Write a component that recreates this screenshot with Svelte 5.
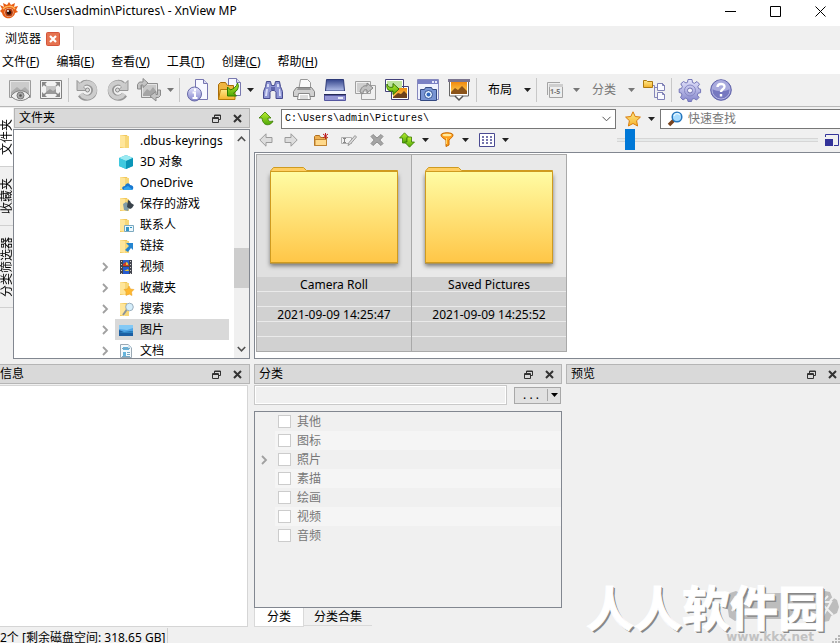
<script>
  const menus = [['文件', 'F'], ['编辑', 'E'], ['查看', 'V'], ['工具', 'T'], ['创建', 'C'], ['帮助', 'H']];
  const folders = [
    { name: '.dbus-keyrings', icon: 'plain' },
    { name: '3D 对象', icon: 'cube' },
    { name: 'OneDrive', icon: 'cloud' },
    { name: '保存的游戏', icon: 'games' },
    { name: '联系人', icon: 'contacts' },
    { name: '链接', icon: 'links' },
    { name: '视频', icon: 'video', more: true },
    { name: '收藏夹', icon: 'favs', more: true },
    { name: '搜索', icon: 'search', more: true },
    { name: '图片', icon: 'picture', more: true, selected: true },
    { name: '文档', icon: 'document', more: true }
  ];
  const thumbs = [
    { name: 'Camera Roll', date: '2021-09-09 14:25:47' },
    { name: 'Saved Pictures', date: '2021-09-09 14:25:52' }
  ];
  const categories = ['其他', '图标', '照片', '素描', '绘画', '视频', '音频'];
  let path = $state('C:\\Users\\admin\\Pictures\\');
  let zoom = $state(4);
</script>

{#snippet caret()}
  <svg width="7" height="4" viewBox="0 0 7 4"><path d="M0 0h7L3.5 4z" fill="currentColor" /></svg>
{/snippet}

{#snippet chevron()}
  <svg width="7" height="10" viewBox="0 0 7 10"><path d="M1 1l4 4-4 4" fill="none" stroke="#a0a0a0" stroke-width="1.8" /></svg>
{/snippet}

{#snippet dockTitle(title)}
  <header class="dock-title">
    <h2>{title}</h2>
    <button aria-label="浮动"><svg width="9" height="9" viewBox="0 0 9 9"><path d="M2.5 3V1h6v4.500h-2M.5 3.500h6v5h-6zM.5 4.500h6M2.500 1.500h6" fill="none" stroke="#333" /></svg></button>
    <button aria-label="关闭"><svg width="9" height="9" viewBox="0 0 9 9"><path d="M1 1l7 7M8 1L1 8" stroke="#333" stroke-width="2" /></svg></button>
  </header>
{/snippet}

{#snippet folderIcon(kind)}
  <svg width="16" height="16" viewBox="0 0 16 16">
    {#if kind === 'cube'}
      <path d="M1 4l7-3 7 3v8l-7 3-7-3z" fill="#35b9d3" /><path d="M1 4l7-3 7 3-7 3z" fill="#9beaf2" /><path d="M8 7l7-3v8l-7 3z" fill="#0b96b8" /><path d="M1 4l7 3v8l-7-3z" fill="#3fc9df" />
    {:else if kind === 'video'}
      <path d="M2 1h12v14H2z" fill="#44464f" /><path d="M5 1h6v6H5z" fill="#315fc4" /><path d="M5 8h6v7H5z" fill="#255bd0" /><path d="M5 5l3-2 3 3v1H5z" fill="#d33c25" /><path d="M8 3l2 1v2H8zM6 12l4-2 1 2z" fill="#e8c53a" /><path d="M3.500 2v13M12.500 2v13" stroke="#ccc" stroke-dasharray="1 2" />
    {:else if kind === 'picture'}
      <path d="M1 3h14v11H1z" fill="#4fa5e6" /><path d="M1 3h14v3l-6 2-8-1z" fill="#84c9f5" /><path d="M1 8l5 2 9-1v5H1z" fill="#1c5fa3" /><path d="M1 11c5-2 9 0 14-2v2H1z" fill="#2d86c4" />
    {:else if kind === 'document'}
      <path d="M2.500 1.500h8l3 3v10h-11z" fill="#f5fafd" stroke="#9ba9b4" /><path d="M5 4h6v3H5zM5 9h3v4H5z" fill="#65b4dc" /><path d="M4 5.500h8M9 9.500h3M9 11.500h3M4 13.500h8" stroke="#78a9c5" /><path d="M10 1v4h4" fill="#d3e4ed" />
    {:else}
      <path d="M2 2h7l1 2h1v11H2z" fill="#f0c75c" /><path d="M2 2l5 1v12l-5-1z" fill="#ffe69a" /><path d="M7 3h4v12H7z" fill="#f7d778" />
      {#if kind === 'cloud'}<path d="M6 15c-3-1-2-4 1-4 1-4 5-3 5-1 4 0 4 4 2 5z" fill="#1878d1" /><path d="M6 13l4-2 5 4H6z" fill="#33a4ec" />
      {:else if kind === 'games'}<path d="M5 8l3-2 4 3-2 6-4-1z" fill="#7f9ba7" /><path d="M10 4l2 1 1 2 3 2-2 3-2 1-3-2z" fill="#39434b" />
      {:else if kind === 'contacts'}<path d="M6.500 8.500h9v6h-9z" fill="#edf7fc" stroke="#7ca9bf" /><path d="M8 10h3v4H8zM12 10h2v1h-2z" fill="#3295c6" />
      {:else if kind === 'links'}<path d="M8 5h7v7l-2-2-3 4-3-2 4-4z" fill="#2585d1" />
      {:else if kind === 'favs'}<path d="M11 6l1.500 3 3.500.5-2.500 2.500.5 3.500-3-1.500-3 1.500.5-3.500L6 9.500 9.500 9z" fill="#ffb82e" stroke="#e79b1e" stroke-width=".5" />
      {:else if kind === 'search'}<circle cx="11.500" cy="6" r="3.800" fill="#d5eefb" stroke="#9bafbd" /><path d="M8.500 9L5 14" stroke="#8c9499" stroke-width="2" />{/if}
    {/if}
  </svg>
{/snippet}

<svg class="defs" width="0" height="0" aria-hidden="true">
  <defs>
    <linearGradient id="folder" x2="0" y2="1"><stop stop-color="#fffca4" /><stop offset="1" stop-color="#ffc647" /></linearGradient>
    <linearGradient id="gold" x2="0" y2="1"><stop stop-color="#ffe98a" /><stop offset="1" stop-color="#f5b32c" /></linearGradient>
    <linearGradient id="green" x2="0" y2="1"><stop stop-color="#b9ee31" /><stop offset="1" stop-color="#4fa808" /></linearGradient>
    <linearGradient id="violet" x2="0" y2="1"><stop stop-color="#e5e5fc" /><stop offset="1" stop-color="#8486cc" /></linearGradient>
    <linearGradient id="gray" x2="0" y2="1"><stop stop-color="#e6e6e6" /><stop offset="1" stop-color="#b4b4b4" /></linearGradient>
    <linearGradient id="lid" x2="0" y2="1"><stop stop-color="#34458c" /><stop offset="1" stop-color="#b4c0ea" /></linearGradient>
    <linearGradient id="sunset" x2="0" y2="1"><stop stop-color="#f08a10" /><stop offset="1" stop-color="#ffd558" /></linearGradient>
    <g id="rotate">
      <path d="M6 5.500a7.500 7.500 0 1 1-1.500 10" fill="none" stroke="#969696" stroke-width="6" />
      <path d="M1 1.500v10h10l-3.500-3.500L4 4.500z" fill="#c9c9c9" stroke="#969696" />
      <path d="M5 7l1.500-1.500a7.500 7.500 0 1 1-1.600 9.200" fill="none" stroke="#cdcdcd" stroke-width="4" />
      <circle cx="11.500" cy="11" r="2" fill="#ddd" stroke="#8a8a8a" />
    </g>
  </defs>
</svg>

<div class="app">
  <div class="titlebar">
    <svg width="19" height="18" viewBox="0 0 19 18"><path d="M2 7L0 3l4 2-1-4 4 2 2-3 2 3 4-2-1 4 4-1-2 4 2 2-3 1c-1 6-11 8-13 0L0 9z" fill="#e75b12" /><path d="M3 7c2-3 9-4 12 0" stroke="#ffb45b" stroke-width="1.500" fill="none" /><circle cx="9" cy="10.500" r="4.500" fill="#f6d9c4" /><circle cx="9" cy="10.500" r="3.900" fill="#b23a0c" /><circle cx="9" cy="10.500" r="2.200" fill="#2f120b" /><circle cx="8" cy="9" r="1" fill="#fff" /></svg>
    <h1>C:\Users\admin\Pictures\ - XnView MP</h1>
    <button aria-label="最小化"><svg width="11" height="11"><path d="M0 5.500h11" stroke="#000" /></svg></button>
    <button aria-label="最大化"><svg width="11" height="11"><path d="M.5.5h10v10H.5z" fill="none" stroke="#000" /></svg></button>
    <button aria-label="关闭窗口"><svg width="11" height="11"><path d="M.5.5l10 10m0-10l-10 10" stroke="#000" /></svg></button>
  </div>

  <div class="window-tabs">
    <div class="window-tab"><span>浏览器</span>
      <button aria-label="关闭标签"><svg width="14" height="14" viewBox="0 0 14 14"><rect x=".5" y=".5" width="13" height="13" rx="1" fill="#e57350" stroke="#d4553b" /><path d="M4 4l6 6m0-6l-6 6" stroke="#fff" stroke-width="2.200" /></svg></button>
    </div>
  </div>

  <nav class="menubar">
    {#each menus as [label, key]}<button>{label}(<u>{key}</u>)</button>{/each}
  </nav>

  <div class="toolbar" role="toolbar" aria-label="工具栏">
    <button class="tool" aria-label="查看图像"><svg width="24" height="24" viewBox="0 0 24 24"><path d="M1.500 2.500h21v17h-21z" fill="#e6e6e6" stroke="#9c9c9c" /><path d="M3 4h18v14H3z" fill="#cbcbcb" /><path d="M3 14l6-5 4 3 4-3 4 4v5H3z" fill="#adadad" /><path d="M3 18c5-7 14-7 19 0-5 6-14 6-19 0z" fill="#eee" stroke="#7d7d7d" /><circle cx="12.500" cy="17.500" r="3.500" fill="#aaa" stroke="#777" /><circle cx="12.500" cy="17.500" r="1.300" fill="#555" /></svg></button>
    <button class="tool" aria-label="全屏"><svg width="24" height="24" viewBox="0 0 24 24"><path d="M1.500 2.500h21v18h-21z" fill="#f2f2f2" stroke="#808080" /><path d="M7 8h10v8H7z" fill="#c4c4c4" /><path d="M7 14l4-3 3 2 3-2v5H7z" fill="#9a9a9a" /><path d="M3 4h5L3 9zM21 4h-5l5 5zM3 19h5l-5-5zM21 19h-5l5-5z" fill="#888" /><path d="M4 5l3 3M20 5l-3 3M4 18l3-3M20 18l-3-3" stroke="#888" stroke-width="1.500" /></svg></button>
    <i class="sep"></i>
    <button class="tool" aria-label="向左旋转"><svg width="22" height="22" viewBox="0 0 22 22"><use href="#rotate" /></svg></button>
    <button class="tool" aria-label="向右旋转"><svg width="22" height="22" viewBox="0 0 22 22"><use href="#rotate" transform="matrix(-1 0 0 1 22 0)" /></svg></button>
    <button class="tool" aria-label="无损变换"><svg width="24" height="24" viewBox="0 0 24 24"><path d="M4.500 5.500h16v14h-16z" fill="#e4e4e4" stroke="#909090" /><path d="M6 7h13v11H6z" fill="#c8c8c8" /><path d="M6 16l4-5 3 2 3-4 3 4v5H6z" fill="#a5a5a5" /><path d="M.5 11V6.500l2-2.500H6V.5l5 4.500-5 4.500V7H4v4z" fill="#c4c4c4" stroke="#8a8a8a" /><path d="M23.500 12v5.500l-2 2H19V23l-6-5 6-4.500v3h1.500V12z" fill="#c4c4c4" stroke="#8a8a8a" /></svg></button>
    <button class="drop dim" aria-label="变换选项">{@render caret()}</button>
    <i class="sep"></i>
    <button class="tool" aria-label="属性"><svg width="22" height="24" viewBox="0 0 22 24"><path d="M8.500 1.500h8l4 4v16h-12z" fill="#f7f8ff" stroke="#7776b1" /><path d="M16.500 1.500v4h4" fill="#d9daf3" stroke="#7776b1" /><circle cx="7.500" cy="16" r="7" fill="url(#violet)" stroke="#6668a7" /><path d="M8 10.500v2.500M5.500 14.500h2.500V20M5.500 20h5" stroke="#fff" stroke-width="2" fill="none" /></svg></button>
    <button class="tool" aria-label="打开"><svg width="24" height="24" viewBox="0 0 24 24"><path d="M11.500.5h8l4 4v13h-12z" fill="#f7f8ff" stroke="#7979af" /><path d="M19.500.5v4h4" fill="#d7d9ef" stroke="#7979af" /><path d="M1.500 21V6.500l2-2h5l2 3h6V21z" fill="#eeb541" stroke="#a96b07" /><path d="M1.500 21.500l2-10H18v10z" fill="url(#gold)" stroke="#b67b0b" /><path d="M10.500 9v9h9l-3-3c4-2 6-6 4-10-1 4-4 5.500-7 7z" fill="url(#green)" stroke="#2e7b00" /></svg></button>
    <button class="drop" aria-label="打开选项">{@render caret()}</button>
    <button class="tool" aria-label="搜索"><svg width="22" height="22" viewBox="0 0 22 22"><path d="M4.500 2.500h4l1 4h3l1-4h4l1 5 2 5v7h-6.500v-6l-1.500-2h-3L8 13.500v6H1.500v-7l2-5z" fill="#8d94d3" stroke="#474b8f" /><path d="M5 5h2v3H5zM15 5h2v3h-2zM4 10h2l-1 7H3zM17 10h1l1 7h-2z" fill="#d9ddf7" /><path d="M9 8h4v3H9z" fill="#5f64ab" /></svg></button>
    <button class="tool" aria-label="打印"><svg width="22" height="22" viewBox="0 0 22 22"><path d="M6 9L7.500.5h7l3 3V9" fill="#fafafa" stroke="#999" /><path d="M3.500 8.500h15l3 4v5h-21v-5z" fill="#d0d0d0" stroke="#808080" /><path d="M5 9h12l1 2H4z" fill="#999" /><path d="M5.500 14.500h11l1 6h-13z" fill="#fff" stroke="#888" /><path d="M7 17h8M7 19h8" stroke="#bbb" /></svg></button>
    <button class="tool" aria-label="扫描"><svg width="22" height="22" viewBox="0 0 22 22"><path d="M2.500.5h17l1 11.500h-19z" fill="url(#lid)" stroke="#2c3978" /><path d="M0 12h22v3H0z" fill="#f4f6fe" /><path d="M0 15h22v2H0z" fill="#262b55" /><path d="M.5 16.500h21v5H.5z" fill="#9496d4" stroke="#5557a0" /><path d="M14 19h5" stroke="#e7e9fa" stroke-width="2" /></svg></button>
    <button class="tool" aria-label="转换"><svg width="22" height="22" viewBox="0 0 22 22"><path d="M.5 2.500h15v12H.5zM6.500 6.500h14v14h-14z" fill="#f0f0f0" stroke="#a0a0a0" /><path d="M2 4h12v9H2z" fill="#cfcfcf" /><path d="M5 13c1-5 4-7 7-6V4l6 5-6 5v-3c-3-1-4 1-4 4z" fill="#c0c0c0" stroke="#858585" /></svg></button>
    <button class="tool" aria-label="批量转换"><svg width="24" height="22" viewBox="0 0 24 22"><path d="M.5.5h18v12H.5zM6.500 7.500h17v13h-17z" fill="#fff" stroke="#42407a" /><path d="M2 2h15v9H2z" fill="#bfe3a0" /><path d="M8 9h14v10H8z" fill="url(#sunset)" /><path d="M8 18l5-4 3 1 3-3 3 3v4H8z" fill="#6d411d" /><path d="M2 5c1 3 3 4 6 3V4.500l6 5.500-6 5.500V12C4 13 1 10 2 5z" fill="url(#green)" stroke="#337400" /></svg></button>
    <button class="tool" aria-label="捕获"><svg width="22" height="22" viewBox="0 0 22 22"><path d="M.5.5h21v20H.5z" fill="#eef1fd" stroke="#8688bd" /><path d="M1 1h20v4H1z" fill="#7a80c4" /><path d="M15 2h2v2h-2zM18 2h2v2h-2z" fill="#e4e6f9" /><path d="M3.500 10.500h4l1-2h6l1 2h4v11h-16z" fill="#7894d3" stroke="#344980" /><circle cx="11.500" cy="15.500" r="4" fill="#e7f3ff" stroke="#314e92" /><circle cx="11.500" cy="15.500" r="2" fill="#3168be" /></svg></button>
    <button class="tool" aria-label="幻灯片"><svg width="24" height="24" viewBox="0 0 24 24"><path d="M2.500 3v15h19V3" fill="#fff" stroke="#666" /><path d="M1 1h22v3H1z" fill="#7b7590" /><path d="M4 4h16v12H4z" fill="url(#sunset)" /><path d="M4 14l4-4 3 2 4-4 5 5v3H4z" fill="#8a5319" /><path d="M8 18l4 4 4-4" fill="#fff" stroke="#555" stroke-width="1.500" /></svg></button>
    <i class="sep"></i>
    <button class="text-tool">布局</button>
    <button class="drop" aria-label="布局选项">{@render caret()}</button>
    <i class="sep"></i>
    <button class="tool" aria-label="评级"><svg width="18" height="18" viewBox="0 0 18 18"><path d="M1.500 14V1.500H14M3.500 3.500h13v13h-13z" fill="#eee" stroke="#a4a4a4" /><path d="M3 3h14v3H3z" fill="#cecece" /><text x="4" y="13" font-size="7" font-weight="bold" fill="#777">1-5</text></svg></button>
    <button class="drop dim" aria-label="评级选项">{@render caret()}</button>
    <button class="text-tool dim">分类</button>
    <button class="drop dim" aria-label="分类选项">{@render caret()}</button>
    <button class="tool" aria-label="目录树"><svg width="24" height="24" viewBox="0 0 24 24"><path d="M1.500 9.500v-7h3l1 1h5v6z" fill="url(#gold)" stroke="#ad7910" /><path d="M11 7.500h1.500v12H15M12.500 9.500H15" stroke="#8486ba" fill="none" /><path d="M15.500 5.500h5l2 2v5h-7zM15.500 14.500h5l2 2v5h-7z" fill="#fafbff" stroke="#8182b7" /><path d="M20.500 5v2.500H23M20.500 14v2.500H23" stroke="#8182b7" fill="none" /></svg></button>
    <i class="sep"></i>
    <button class="tool" aria-label="设置"><svg width="22" height="22" viewBox="0 0 22 22"><path d="M9 .5h4l.5 3 2 .8 2.500-1.800 2.500 2.700-1.700 2.500.8 2 2 .5v3.500l-2.500.5-.8 2 1.700 2.300-2.500 2.500-2.500-1.500-2 .8-.5 2.200H9l-.5-2.500-2-.8L4 21l-2.500-2.500L3 16l-.8-2-2-.5V10l2.300-.5.8-2-1.500-2.700L4.500 2.500 7 4l1.500-.7z" fill="url(#violet)" stroke="#7476b8" /><circle cx="11" cy="11.500" r="5.500" fill="none" stroke="#8889c5" /><circle cx="11" cy="11.500" r="2.500" fill="#f3f3fc" stroke="#7172b1" /></svg></button>
    <button class="tool" aria-label="帮助"><svg width="22" height="22" viewBox="0 0 22 22"><circle cx="11" cy="11" r="10.300" fill="#7678c0" stroke="#6365ab" /><circle cx="11" cy="11" r="9" fill="none" stroke="#b3b4e2" /><path d="M2 10a9 9 0 0118 0c-6 3-12 3-18 0z" fill="#a9aadd" /><path d="M7.500 8c0-4 7-4 7-.5 0 3-3.500 2.500-3.500 5.500M11 15v2.500" stroke="#fff" stroke-width="2.400" fill="none" /></svg></button>
  </div>

  <div class="upper">
    <div class="side-tabs">
      <button class="active">文件夹</button>
      <button>收藏夹</button>
      <button>分类筛选器</button>
    </div>
    <section class="folders">
      {@render dockTitle('文件夹')}
      <div class="tree">
        <ul>
          {#each folders as f}
            <li>
              <span class="expander">{#if f.more}{@render chevron()}{/if}</span>
              <span class="entry" class:selected={f.selected}>{@render folderIcon(f.icon)}{f.name}</span>
            </li>
          {/each}
        </ul>
        <div class="scrollbar">
          <svg width="9" height="6" viewBox="0 0 9 6"><path d="M.8 5l3.700-3.800L8.200 5" fill="none" stroke="#505050" stroke-width="1.600" /></svg>
          <div class="track"><div class="grip"></div></div>
          <svg width="9" height="6" viewBox="0 0 9 6"><path d="M.8 1l3.700 3.800L8.200 1" fill="none" stroke="#505050" stroke-width="1.600" /></svg>
        </div>
      </div>
    </section>

    <main class="browser">
      <div class="address-row">
        <button class="up" aria-label="上一级"><svg width="16" height="16" viewBox="0 0 16 16"><path d="M1 7l6-6 6 6h-3c0 3 1 4 5 3-1 4-10 7-11-3z" fill="url(#green)" stroke="#397900" stroke-width=".8" /></svg></button>
        <div class="address">
          <input aria-label="路径" bind:value={path} />
          <button aria-label="路径历史"><svg width="9" height="6" viewBox="0 0 9 6"><path d="M.5.8l4 4 4-4" fill="none" stroke="#555" /></svg></button>
        </div>
        <button class="star" aria-label="收藏"><svg width="16" height="16" viewBox="0 0 16 16"><path d="M8 .8l2.200 4.700 5.200.6-3.800 3.600 1 5.300L8 12.500 3.400 15l1-5.300L.6 6.100l5.200-.6z" fill="url(#gold)" stroke="#d97c0a" /></svg></button>
        <button class="drop" aria-label="收藏选项">{@render caret()}</button>
        <div class="quick">
          <svg width="16" height="16" viewBox="0 0 16 16"><path d="M7 9l-5 5" stroke="#79431d" stroke-width="3.500" /><circle cx="10" cy="6" r="4.800" fill="#a8dcff" stroke="#2676bd" stroke-width="1.500" /><path d="M7 5c1-3 4-3 6-1" stroke="#e5f7ff" fill="none" stroke-width="1.500" /></svg>
          <input aria-label="快速查找" placeholder="快速查找" />
        </div>
      </div>
      <div class="action-row">
        <button class="act" aria-label="后退"><svg width="14" height="14" viewBox="0 0 14 14"><path d="M.8 7L7 .8v3.700h6v5H7v3.700z" fill="#ddd" stroke="#9b9b9b" /></svg></button>
        <button class="act" aria-label="前进"><svg width="14" height="14" viewBox="0 0 14 14"><path d="M13.200 7L7 .8v3.700H1v5h6v3.700z" fill="#ddd" stroke="#9b9b9b" /></svg></button>
        <button class="act group" aria-label="新建文件夹"><svg width="16" height="14" viewBox="0 0 16 14"><path d="M1.500 12.500V3.500l1-1h4l1 2h6v8z" fill="#eeb052" stroke="#b17021" /><path d="M2 12.500v-6h11.500v6z" fill="#ffd98b" stroke="#c08330" /><path d="M12.500 0v6M10 1l5 4M15 1l-5 4" stroke="#bd1d23" /></svg></button>
        <button class="act" aria-label="重命名"><svg width="16" height="14" viewBox="0 0 16 14"><path d="M.5 4.500h10v6H.5z" fill="#f2f2f2" stroke="#b0b0b0" /><path d="M2 5.500h3M3.500 5.500v4M2 9.500h3" stroke="#888" /><path d="M7 12.500l1-3 6-7 1.500 1.500-6 7z" fill="#ddd" stroke="#999" /></svg></button>
        <button class="act" aria-label="删除"><svg width="14" height="14" viewBox="0 0 14 14"><path d="M3 1.500L7 5l4-3.500 2 2L9.800 7l3.200 3.500-2 2L7 9l-4 3.500-2-2L4.200 7 1 3.500z" fill="#a5a5a5" stroke="#8d8d8d" /></svg></button>
        <button class="act group" aria-label="刷新"><svg width="16" height="16" viewBox="0 0 16 16"><path d="M5.500.8l5 5.200H8v5H3.500V6H.5z" fill="url(#green)" stroke="#397900" stroke-width=".8" /><path d="M10.500 15.200l-5-5.200H8V5h4.500v5h3z" fill="url(#green)" stroke="#397900" stroke-width=".8" /></svg></button>
        <button class="drop" aria-label="刷新选项">{@render caret()}</button>
        <button class="act" aria-label="筛选"><svg width="14" height="15" viewBox="0 0 14 15"><path d="M1 3c0-3 12-3 12 0 0 2-2 3-4 5v5l-3 1.500V8C3 6 1 5 1 3z" fill="#ff9e1b" stroke="#c86a00" /><ellipse cx="7" cy="3" rx="4.500" ry="1.300" fill="#ffeaa0" /><path d="M6.500 6v6" stroke="#ffda6e" /></svg></button>
        <button class="drop" aria-label="筛选选项">{@render caret()}</button>
        <button class="act" aria-label="视图"><svg width="16" height="14" viewBox="0 0 16 14"><path d="M.5.5h15v13H.5z" fill="#fff" stroke="#4a4a92" /><path d="M3 4h10M3 7h10M3 10h10" stroke="#4a4a92" stroke-width="1.500" stroke-dasharray="2 2" /></svg></button>
        <button class="drop" aria-label="视图选项">{@render caret()}</button>
        <input class="size" type="range" min="0" max="100" aria-label="缩略图大小" bind:value={zoom} />
        <button class="fit" aria-label="适合大小"><svg width="14" height="12" viewBox="0 0 14 12"><path d="M.5 3V.5h13v11H9" fill="none" stroke="#333399" /><path d="M0 5h8v7H0z" fill="#333399" /></svg></button>
      </div>
      <div class="gallery">
        <div class="cards">
          {#each thumbs as t}
            <article>
              <div class="thumb">
                <svg width="134" height="104" viewBox="0 0 134 104"><path class="shadow" d="M3 6h128v91H3z" fill="#888" /><path d="M3.500 96V4l3-3.500h30l3 3h91V96z" fill="#ffce62" stroke="#cf9b20" /><path d="M3.500 4.500h127v91H3.500z" fill="url(#folder)" stroke="#cf9b20" /></svg>
              </div>
              <p>{t.name}</p><p></p><p>{t.date}</p><p></p><p></p>
            </article>
          {/each}
        </div>
      </div>
    </main>
  </div>

  <div class="lower">
    <section class="info">
      {@render dockTitle('信息')}
      <div class="info-body"></div>
    </section>
    <section class="category">
      {@render dockTitle('分类')}
      <div class="category-filter">
        <input aria-label="分类筛选" disabled />
        <button class="split"><span>. . .</span><span class="split-arrow">{@render caret()}</span></button>
      </div>
      <ul class="category-list">
        {#each categories as c}
          <li>
            <span class="toggle">{#if c === '照片'}{@render chevron()}{/if}</span>
            <label><input type="checkbox" />{c}</label>
          </li>
        {/each}
      </ul>
      <div class="bottom-tabs"><button class="active">分类</button><button>分类合集</button></div>
    </section>
    <section class="preview">
      {@render dockTitle('预览')}
    </section>
  </div>

  <footer>
    <span>2个 [剩余磁盘空间: 318.65 GB]</span>
    <svg width="8" height="8" viewBox="0 0 8 8"><path d="M6 0h2v2H6zM3 3h2v2H3zM6 3h2v2H6zM0 6h2v2H0zM3 6h2v2H3zM6 6h2v2H6z" fill="#b5b5b5" /></svg>
  </footer>

  <div class="watermark">
    <svg width="116" height="34" viewBox="0 0 116 34"><path d="M6 3l6-2 4 2h80l5-2 5 1 2 5 5 3 2 7-2 6-6 3-2 5-6 1-4-3H16l-5 2-6-4-1-7-4-5 3-6z" fill="#bdbdbd" /><path d="M12 6l-4 6 4 1-4 8M104 6l-6 6h9l-8 14M99 15l10 10M110 7l-4 4" fill="none" stroke="#f0f0f0" stroke-width="2" /></svg>
    <strong>人人软件园</strong>
    <small>www.kkx.net</small>
  </div>
</div>

<style>
  :global(body) { margin: 0; background: #f0f0f0; }
  .app, .app :global(*) { box-sizing: border-box; }
  .app {
    position: relative; display: flex; flex-direction: column; height: 100vh; overflow: hidden;
    background: #f0f0f0; color: #000; font: 12px/16px "Noto Sans", "Noto Sans CJK SC", sans-serif;
  }
  .defs { position: absolute; }
  svg { display: block; flex: none; overflow: visible; }
  h1, h2, p, ul { margin: 0; padding: 0; font: inherit; list-style: none; }
  button { border: 0; padding: 0; background: none; color: inherit; font: inherit; display: flex; align-items: center; justify-content: center; white-space: nowrap; }
  input { font: inherit; min-width: 0; margin: 0; }

  .titlebar { display: flex; align-items: center; height: 22px; background: #fff; flex: none; }
  .titlebar h1 { flex: 1; margin-left: 4px; }
  .titlebar button { width: 45px; height: 22px; }
  .titlebar button:last-child { margin-right: -3px; }
  .window-tabs { display: flex; flex: none; height: 28px; padding-top: 4px; background: linear-gradient(#fff 4px, #f0f0f0 4px); }
  .window-tab { display: flex; align-items: center; gap: 5px; width: 74px; padding-left: 5px; background: #fff; border: 1px solid #d9d9d9; border-width: 1px 1px 0 0; }
  .menubar { display: flex; flex: none; gap: 17px; height: 24px; padding-left: 2px; background: #fff; }
  .toolbar { display: flex; flex: none; align-items: center; height: 33px; padding-left: 4px; border-bottom: 1px solid #b8b8b8; }
  .tool { width: 31px; height: 28px; flex: none; }
  .drop { width: 13px; height: 20px; flex: none; color: #222; }
  .dim, .drop.dim { color: #777; }
  .text-tool { padding: 0 9px; height: 28px; }
  .sep { width: 1px; height: 24px; margin: 0 2px; background: #c8c8c8; }

  .upper { display: flex; flex: 251 0 0; min-height: 0; padding-top: 1px; }
  .side-tabs { display: flex; flex-direction: column; flex: none; width: 13px; }
  .side-tabs button { height: 59px; width: 13px; writing-mode: vertical-rl; text-orientation: sideways; transform: rotate(180deg); border-top: 1px solid #d0d0d0; line-height: 13px; }
  .side-tabs button:last-child { height: 82px; }
  .side-tabs .active { background: #fff; }
  .folders { display: flex; flex-direction: column; width: 237px; flex: none; margin-right: 4px; }
  .dock-title { display: flex; align-items: center; flex: none; height: 20px; padding: 0 4px; border: 1px solid #b5b5b5; background: #d9d9d9; }
  .dock-title h2 { flex: 1; }
  .dock-title button { width: 15px; height: 16px; margin-left: 6px; }
  .folders .dock-title { margin-left: 1px; }
  .tree { display: flex; flex: 1; min-height: 0; margin-top: 1px; border: 1px solid #828790; background: #fff; overflow: hidden; }
  .tree ul { flex: 1; padding-right: 5px; }
  .tree li { display: flex; height: 21px; }
  .expander { display: flex; align-items: center; width: 101px; padding-left: 88px; }
  .entry { display: flex; flex: 1; align-items: center; gap: 6px; padding-left: 3px; white-space: nowrap; }
  .selected { background: #d9d9d9; }
  .scrollbar { display: flex; flex-direction: column; align-items: center; width: 15px; padding: 6px 0; background: #f0f0f0; }
  .track { flex: 1; width: 100%; display: flex; flex-direction: column; justify-content: flex-end; padding-bottom: 58px; }
  .grip { height: 40px; background: #cdcdcd; }

  .browser { display: flex; flex-direction: column; flex: 1; min-width: 0; }
  .address-row { display: flex; flex: none; align-items: center; height: 21px; }
  .up { width: 23px; margin-right: 4px; }
  .address { display: flex; flex: 339 0 0; min-width: 0; height: 20px; border: 1px solid #777; background: #fff; }
  .address input { flex: 1; border: 0; padding: 0 3px; background: none; font: 10px/16px "Liberation Mono", monospace; }
  .address button { width: 17px; }
  .star { width: 27px; margin-left: 3px; }
  .address-row .drop { width: 10px; margin-right: 4px; }
  .quick { display: flex; flex: 176 0 0; min-width: 0; align-items: center; gap: 5px; height: 20px; padding-left: 6px; border: 1px solid #777; border-right: 0; background: #fff; }
  .quick input { flex: 1; border: 0; padding: 0; background: none; }
  .quick input::placeholder { color: #777; opacity: 1; }
  .action-row { display: flex; flex: none; align-items: center; height: 23px; padding-bottom: 2px; }
  .act { width: 28px; height: 20px; flex: none; }
  .act:first-child { width: 23px; }
  .group { margin-left: 2px; }
  .action-row .drop { width: 8px; margin-right: 4px; }
  .size { appearance: none; flex: 1; height: 21px; margin-left: 104px; background: linear-gradient(#d6d6d6 1px, #e7eaea 1px 3px, #d6d6d6 3px) center / 100% 4px no-repeat; }
  .size::-webkit-slider-thumb { appearance: none; width: 10px; height: 21px; background: #0078d7; }
  .fit { width: 14px; margin: 0 1px 0 7px; }
  .gallery { flex: 1; min-height: 0; padding: 1px; border: 1px solid #828790; border-right: 0; background: #fff; overflow: hidden; }
  .cards { display: flex; width: 311px; border: 1px solid #a9a9a9; }
  article { flex: 1; background: #e9e9e9; }
  article:first-child { background: #e0e0e0; border-right: 1px solid #a9a9a9; }
  .thumb { display: flex; justify-content: center; height: 122px; padding-top: 12px; }
  .shadow { filter: drop-shadow(0 2px 2px #777); }
  article p { height: 15px; background: #d1d1d1; border-bottom: 1px solid #eaeaea; text-align: center; line-height: 16px; }
  article p:last-child { height: 14px; border-bottom: 0; }

  .lower { display: flex; flex: 263 0 0; min-height: 0; margin-top: 5px; gap: 4px; }
  .lower section { display: flex; flex-direction: column; min-width: 0; }
  .info { flex: 0 0 250px; }
  .info .dock-title { padding-left: 0; border-left: 0; }
  .info-body { flex: 1; margin: 1px 2px 0 0; background: #fff; border: 1px solid #d5d5d5; border-left: 0; }
  .category { flex: 0 0 308px; }
  .category-filter { display: flex; align-items: center; gap: 7px; height: 22px; margin-bottom: 5px; padding-right: 1px; }
  .category-filter input { flex: 1; height: 20px; border: 1px solid #c9c9c9; background: #f0f0f0; box-shadow: inset 0 0 0 1px #fff; }
  .split { width: 47px; height: 17px; border: 1px solid #a8a8a8; background: #e1e1e1; }
  .split span { flex: 1; }
  .split .split-arrow { display: flex; align-items: center; justify-content: center; flex: 0 0 13px; height: 12px; border-left: 1px solid #a8a8a8; }
  .category-list { flex: 1; min-height: 0; border: 1px solid #828790; overflow: hidden; }
  .category-list li { display: flex; height: 19px; color: #777; }
  .toggle { display: flex; align-items: center; width: 20px; padding-left: 6px; }
  .category-list label { display: flex; flex: 1; align-items: center; gap: 6px; padding-left: 3px; }
  .category-list li:nth-child(even) label { background: #f5f5f5; }
  .category-list input { appearance: none; width: 13px; height: 13px; border: 1px solid #ccc; background: #fff; }
  .bottom-tabs { display: flex; height: 19px; flex: none; align-items: flex-start; }
  .bottom-tabs button { height: 18px; padding: 0 10px; border-bottom: 1px solid #d9d9d9; }
  .bottom-tabs .active { height: 19px; padding: 0 12px; background: #fff; border: 1px solid #d9d9d9; border-top: 0; }
  .preview { flex: 1; }
  .preview .dock-title { border-right: 0; padding-right: 0; }
  footer { display: flex; align-items: flex-end; justify-content: space-between; flex: none; height: 16px; }
  footer span { align-self: flex-start; line-height: 20px; padding-right: 2px; margin-top: 1px; border-right: 1px solid #d0d0d0; }

  .watermark { position: absolute; right: 0; bottom: 0; width: 254px; height: 62px; pointer-events: none; }
  .watermark svg { position: absolute; right: 0; top: 9px; }
  .watermark strong { position: absolute; left: 0; top: 0; font: bold 48px/48px "Noto Sans CJK SC", sans-serif; color: #fff; -webkit-text-stroke: 1px #fff; text-shadow: 1px 1px #888, 2px 2px #888; white-space: nowrap; }
  .watermark small { position: absolute; right: 26px; bottom: 0; font: bold 12px/12px "DejaVu Sans", sans-serif; color: #c2c2c2; }
</style>
